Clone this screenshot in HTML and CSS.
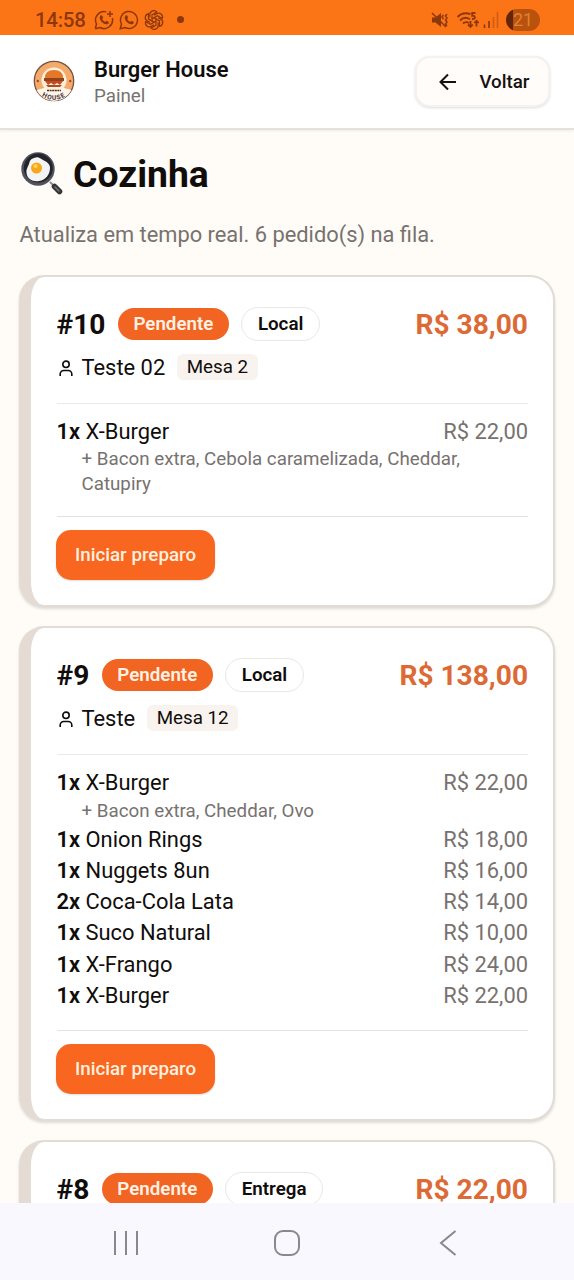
FILE: index.html
```html
<!DOCTYPE html>
<html lang="pt-BR">
<head>
<meta charset="utf-8">
<title>Burger House - Cozinha</title>
<link rel="stylesheet" href="styles.css">
</head>
<body>
<svg width="0" height="0" class="defs">
  <symbol id="user" viewBox="0 0 14 17"><circle cx="7" cy="4.300" r="3.200"/><path d="M1.200 16v-2a3.500 3.500 0 0 1 3.500-3.500h4.600a3.500 3.500 0 0 1 3.500 3.500v2"/></symbol>
  <symbol id="chat" viewBox="0 0 20 20"><path d="M1.200 18.800 2.500 14A8.500 8.500 0 1 1 6 17.500Z"/><path d="M6.500 5.500 8 5.300l1.200 2.500-1 1.300c.8 1.500 1.600 2.200 3 2.900l1.200-1.300 2.400 1.200c0 2-1.300 2.500-2.700 2.400-3.300-.5-6.100-3.700-6.400-6.300 0-1 .2-1.800.8-2.500Z" fill="currentColor" stroke="none"/></symbol>
</svg>
<div class="screen">
  <div class="status">
    <span class="clock">14:58</span>
    <svg class="s-icon" viewBox="0 0 20 20"><path d="M1.200 18.800 2.500 14A8.500 8.500 0 0 1 12.300 1.900M18.300 8A8.500 8.500 0 0 1 6 17.500L1.200 18.800M16 1v6M13 4h6"/><path d="M6.500 5.500 8 5.300l1.200 2.500-1 1.300c.8 1.500 1.600 2.200 3 2.900l1.200-1.300 2.400 1.200c0 2-1.300 2.500-2.700 2.400-3.300-.5-6.100-3.700-6.400-6.300 0-1 .2-1.800.8-2.500Z" fill="currentColor" stroke="none"/></svg>
    <svg class="s-icon"><use href="#chat"/></svg>
    <svg class="s-icon knot" viewBox="-10 -10 20 20">
      <g id="petal"><path d="M-4.200-2.500V-5.500A4 4 0 0 1 2.800-8L-2-5.200V1.200"/></g>
      <use href="#petal" transform="rotate(60)"/><use href="#petal" transform="rotate(120)"/><use href="#petal" transform="rotate(180)"/><use href="#petal" transform="rotate(240)"/><use href="#petal" transform="rotate(300)"/>
    </svg>
    <span class="dot"></span>
    <svg class="mute" viewBox="0 0 18 18"><path d="M1 6.500h3.500L10 2v14l-5.500-4.500H1Z" fill="currentColor" stroke="none"/><path d="M1 2 15 16M12.500 4l-1.500 2 1.500 2M16 3l-1.500 2L16 7l-1.500 2 1.500 2-1.500 2 1.500 2"/></svg>
    <svg class="wifi" viewBox="0 0 24 18"><path d="M1.500 6C5.500 2 10 1.500 14.500 3.200M4 9.500c3-3 7-3.200 10-1.200M7 12.500c2-1.800 4-1.800 6-.5M19.500 2h-3.300v2.800c3-.8 4.200 3.400-.2 3.200"/><path d="M14.500 10v5.500m-2.500-2 2.500 2.500 2.300-2.500M20.500 15.500V10M18.300 12l2.200-2.300 2.200 2.300"/></svg>
    <svg class="signal" viewBox="0 0 16 16"><path d="M1.500 12.500V16M6 9v7"/><path d="M10.500 5v11M14.500 0v16" opacity=".4"/></svg>
    <span class="battery">21</span>
  </div>

  <header class="header">
    <svg class="logo" viewBox="0 0 42 42">
      <circle cx="21" cy="21" r="19.700" fill="#f4aa6b" stroke="#79533e" stroke-width="1.300"/>
      <path d="M3.500 30a19.500 19.500 0 0 0 35 0L31 28H11Z" fill="#fff4e9"/>
      <circle cx="21" cy="20" r="12.500" fill="#fff0dd"/>
      <path d="M12 18q0-8 9-8t9 8Z" fill="#e47827"/>
      <path d="M11 18h20v3H11Z" fill="#8e451e"/><path d="M12 21h18l-3 4-3-2-3 2-3-2-3 2Z" fill="#cc4822"/><path d="M13 25h16l-2 2H15Z" fill="#a75120"/>
      <circle cx="4.800" cy="21" r="1.200" fill="#a54824"/><circle cx="37.200" cy="21" r="1.200" fill="#a54824"/>
      <path id="arc" d="M5 33Q21 47 37 33" fill="none"/>
      <text class="logo-name"><textPath href="#arc" startOffset="50%" text-anchor="middle">HOUSE</textPath></text>
      <path d="M14 30.500h14" stroke="#4b302b" stroke-width="1.500" stroke-dasharray="2 .6"/>
    </svg>
    <div class="brand"><strong class="brand-name">Burger House</strong><span class="brand-sub">Painel</span></div>
    <button class="back"><svg viewBox="0 0 18 18"><path d="M17 9H1.500M9 1.500 1.500 9 9 16.500"/></svg>Voltar</button>
  </header>

  <main class="main">
    <h1 class="title">
      <svg class="pan" viewBox="0 0 42 44"><path d="M29 30 33 34" stroke="#8b8b90" stroke-width="2"/><path d="m33.500 34.500 5 5" stroke="#35363a" stroke-width="5.600" stroke-linecap="round"/><path d="m34 35 4 4" stroke="#77787a" stroke-width="1.400" stroke-linecap="round"/><circle cx="17" cy="17" r="16.700" fill="#50515b"/><circle cx="17.300" cy="16" r="14.500" fill="#24252c"/><path d="M13 6c4-2 6 0 9 2 4 2 7 4 7 8 0 6-4 12-11 13-6 1-12-2-12.500-8-.5-4 1.500-6 2.500-9 1-4 2-5 5-6Z" fill="#f5f4f5"/><circle cx="15.500" cy="16" r="5.500" fill="#f9a719"/><circle cx="14.500" cy="14" r="2" fill="#ffd45f"/></svg>
      Cozinha</h1>
    <p class="subtitle">Atualiza em tempo real. 6 pedido(s) na fila.</p>

    <section class="card">
      <div class="top"><b class="number">#10</b><span class="badge pending">Pendente</span><span class="badge">Local</span><b class="total">R$ 38,00</b></div>
      <div class="client"><svg class="user"><use href="#user"/></svg>Teste 02<span class="table">Mesa 2</span></div>
      <div class="items">
        <div class="item"><span><b>1x</b> X-Burger</span><span class="price">R$ 22,00</span></div>
        <p class="extra">+ Bacon extra, Cebola caramelizada, Cheddar, Catupiry</p>
      </div>
      <div class="actions"><button class="start">Iniciar preparo</button></div>
    </section>

    <section class="card">
      <div class="top"><b class="number">#9</b><span class="badge pending">Pendente</span><span class="badge">Local</span><b class="total">R$ 138,00</b></div>
      <div class="client"><svg class="user"><use href="#user"/></svg>Teste<span class="table">Mesa 12</span></div>
      <div class="items">
        <div class="item"><span><b>1x</b> X-Burger</span><span class="price">R$ 22,00</span></div>
        <p class="extra">+ Bacon extra, Cheddar, Ovo</p>
        <div class="item"><span><b>1x</b> Onion Rings</span><span class="price">R$ 18,00</span></div>
        <div class="item"><span><b>1x</b> Nuggets 8un</span><span class="price">R$ 16,00</span></div>
        <div class="item"><span><b>2x</b> Coca-Cola Lata</span><span class="price">R$ 14,00</span></div>
        <div class="item"><span><b>1x</b> Suco Natural</span><span class="price">R$ 10,00</span></div>
        <div class="item"><span><b>1x</b> X-Frango</span><span class="price">R$ 24,00</span></div>
        <div class="item"><span><b>1x</b> X-Burger</span><span class="price">R$ 22,00</span></div>
      </div>
      <div class="actions"><button class="start">Iniciar preparo</button></div>
    </section>

    <section class="card">
      <div class="top"><b class="number">#8</b><span class="badge pending">Pendente</span><span class="badge">Entrega</span><b class="total">R$ 22,00</b></div>
    </section>
  </main>

  <nav class="nav">
    <svg viewBox="0 0 28 28"><path d="M3 2v24M14 2v24M25 2v24"/></svg>
    <svg viewBox="0 0 28 28"><rect x="2" y="2" width="24" height="24" rx="8"/></svg>
    <svg viewBox="0 0 28 28"><path d="M21.500 2 7 14l14.500 12"/></svg>
  </nav>
</div>
</body>
</html>
```
FILE: styles.css
```css
* { box-sizing: border-box; }
body { margin: 0; background: #fffbf6; color: #100d0b; font-family: Roboto, sans-serif; }
svg { flex: none; fill: none; stroke: currentColor; }
p, h1 { margin: 0; }
button { font-family: inherit; }
.defs { display: block; }
.screen { height: 1280px; display: flex; flex-direction: column; overflow: hidden; }

.status { flex: none; height: 35px; padding: 4px 34px 0 35px; display: flex; align-items: center; background: #fb7516; color: #8e370c; }
.clock { width: 58.500px; font-size: 20.500px; font-weight: 500; letter-spacing: -.3px; }
.s-icon { width: 20px; height: 20px; margin-right: 5px; stroke-width: 1.500; }
.knot { stroke-width: 1.250; }
.dot { width: 7px; height: 7px; margin-left: 8px; border-radius: 50%; background: currentColor; }
.mute { width: 18px; height: 18px; margin-left: auto; stroke-width: 1.500; }
.wifi { width: 24px; height: 18px; margin-left: 7px; stroke-width: 1.800; }
.signal { width: 16px; height: 16px; margin-left: 3px; stroke-width: 1.600; }
.battery { width: 34px; height: 22px; margin-left: 7px; border-radius: 11px; background: linear-gradient(90deg, #64250a 7px, #b9520d 7px); color: #e18132; font-size: 18px; line-height: 22px; text-align: center; }

.header { flex: none; height: 95px; padding: 0 24px 0 33px; display: flex; align-items: center; background: #fff; border-bottom: 2px solid #e4e0e0; box-shadow: 0 1px 3px #0001; }
.logo { width: 42px; height: 42px; margin-top: -1px; stroke: none; }
.logo-name { font-size: 6.500px; font-weight: 700; letter-spacing: 1px; fill: #423037; }
.brand { margin-left: 19px; padding-top: 1px; display: flex; flex-direction: column; }
.brand-name { font-size: 21.900px; line-height: 27px; font-weight: 600; }
.brand-sub { font-size: 18.750px; line-height: 26px; color: #77726f; }
.back { height: 51px; width: 135px; margin-left: auto; padding: 0 18.500px 0 22px; display: flex; align-items: center; justify-content: space-between; background: #fffcfa; border: 2px solid #f5f1ef; border-radius: 15px; box-shadow: 0 1px 3px #0002; color: #17120f; font-size: 18.750px; font-weight: 500; }
.back svg { width: 18px; height: 18px; stroke-width: 2; }

.main { flex: 1; min-height: 0; padding: 21px 19px 0; overflow: hidden; }
.title { height: 46px; display: flex; align-items: center; gap: 10px; font-size: 37.300px; line-height: 46px; font-weight: 700; }
.pan { width: 42px; height: 44px; margin-left: 2px; stroke: none; }
.subtitle { margin: 21px 0 25px; padding-left: .5px; height: 32px; font-size: 21.850px; line-height: 33px; color: #77726f; }

.card { margin-bottom: 19px; padding: 29px 25px 25px 25.500px; background: #fff; border: 2.500px solid #e1dcd5; border-left: 12px solid #e4dcd4; border-radius: 25px; box-shadow: 0 2px 3px #0002; }
.top { height: 36px; display: flex; align-items: center; }
.number { font-size: 28.100px; font-weight: 700; margin-right: 12.500px; }
.badge { height: 34px; padding: 0 15.500px; margin-right: 12.500px; border: 1.500px solid #ebe7e3; border-radius: 17px; font-size: 18.750px; line-height: 32px; font-weight: 600; }
.pending { height: 32px; background: #f26422; border: 0; line-height: 32px; color: #fff1e4; }
.total { margin-left: auto; font-size: 28.100px; font-weight: 700; color: #dd6935; }
.client { height: 31px; margin-top: 9.500px; display: flex; align-items: center; font-size: 21.900px; }
.user { width: 14px; height: 17px; margin: 2px 9px 0 2px; }
.user, .user * { stroke-width: 1.600; }
.table { margin-left: 12px; padding: 0 9.500px; background: #f8f3ef; border-radius: 6px; font-size: 18.750px; line-height: 26px; }
.items { margin-top: 20.500px; padding: 12px 0 19px; border-top: 1.500px solid #ece9e6; border-bottom: 1.500px solid #e5e1de; }
.item { display: flex; justify-content: space-between; font-size: 21.900px; line-height: 31.250px; }
.item b { font-weight: 600; }
.price { color: #77726f; }
.extra { padding-left: 25px; font-size: 18.750px; line-height: 25px; color: #77726f; }
.actions { padding-top: 13px; }
.start { display: block; width: 159px; height: 50px; padding: 0; margin-left: -.5px; border: 0; border-radius: 15px; background: #f96620; color: #fff0df; font-size: 18.750px; font-weight: 500; box-shadow: 0 1px 2px #0002; }

.nav { flex: none; height: 77px; padding: 3px 112px 0; display: flex; align-items: center; justify-content: space-between; background: #f8f8fe; color: #88888e; }
.nav svg { width: 28px; height: 28px; stroke-width: 2; }
```
